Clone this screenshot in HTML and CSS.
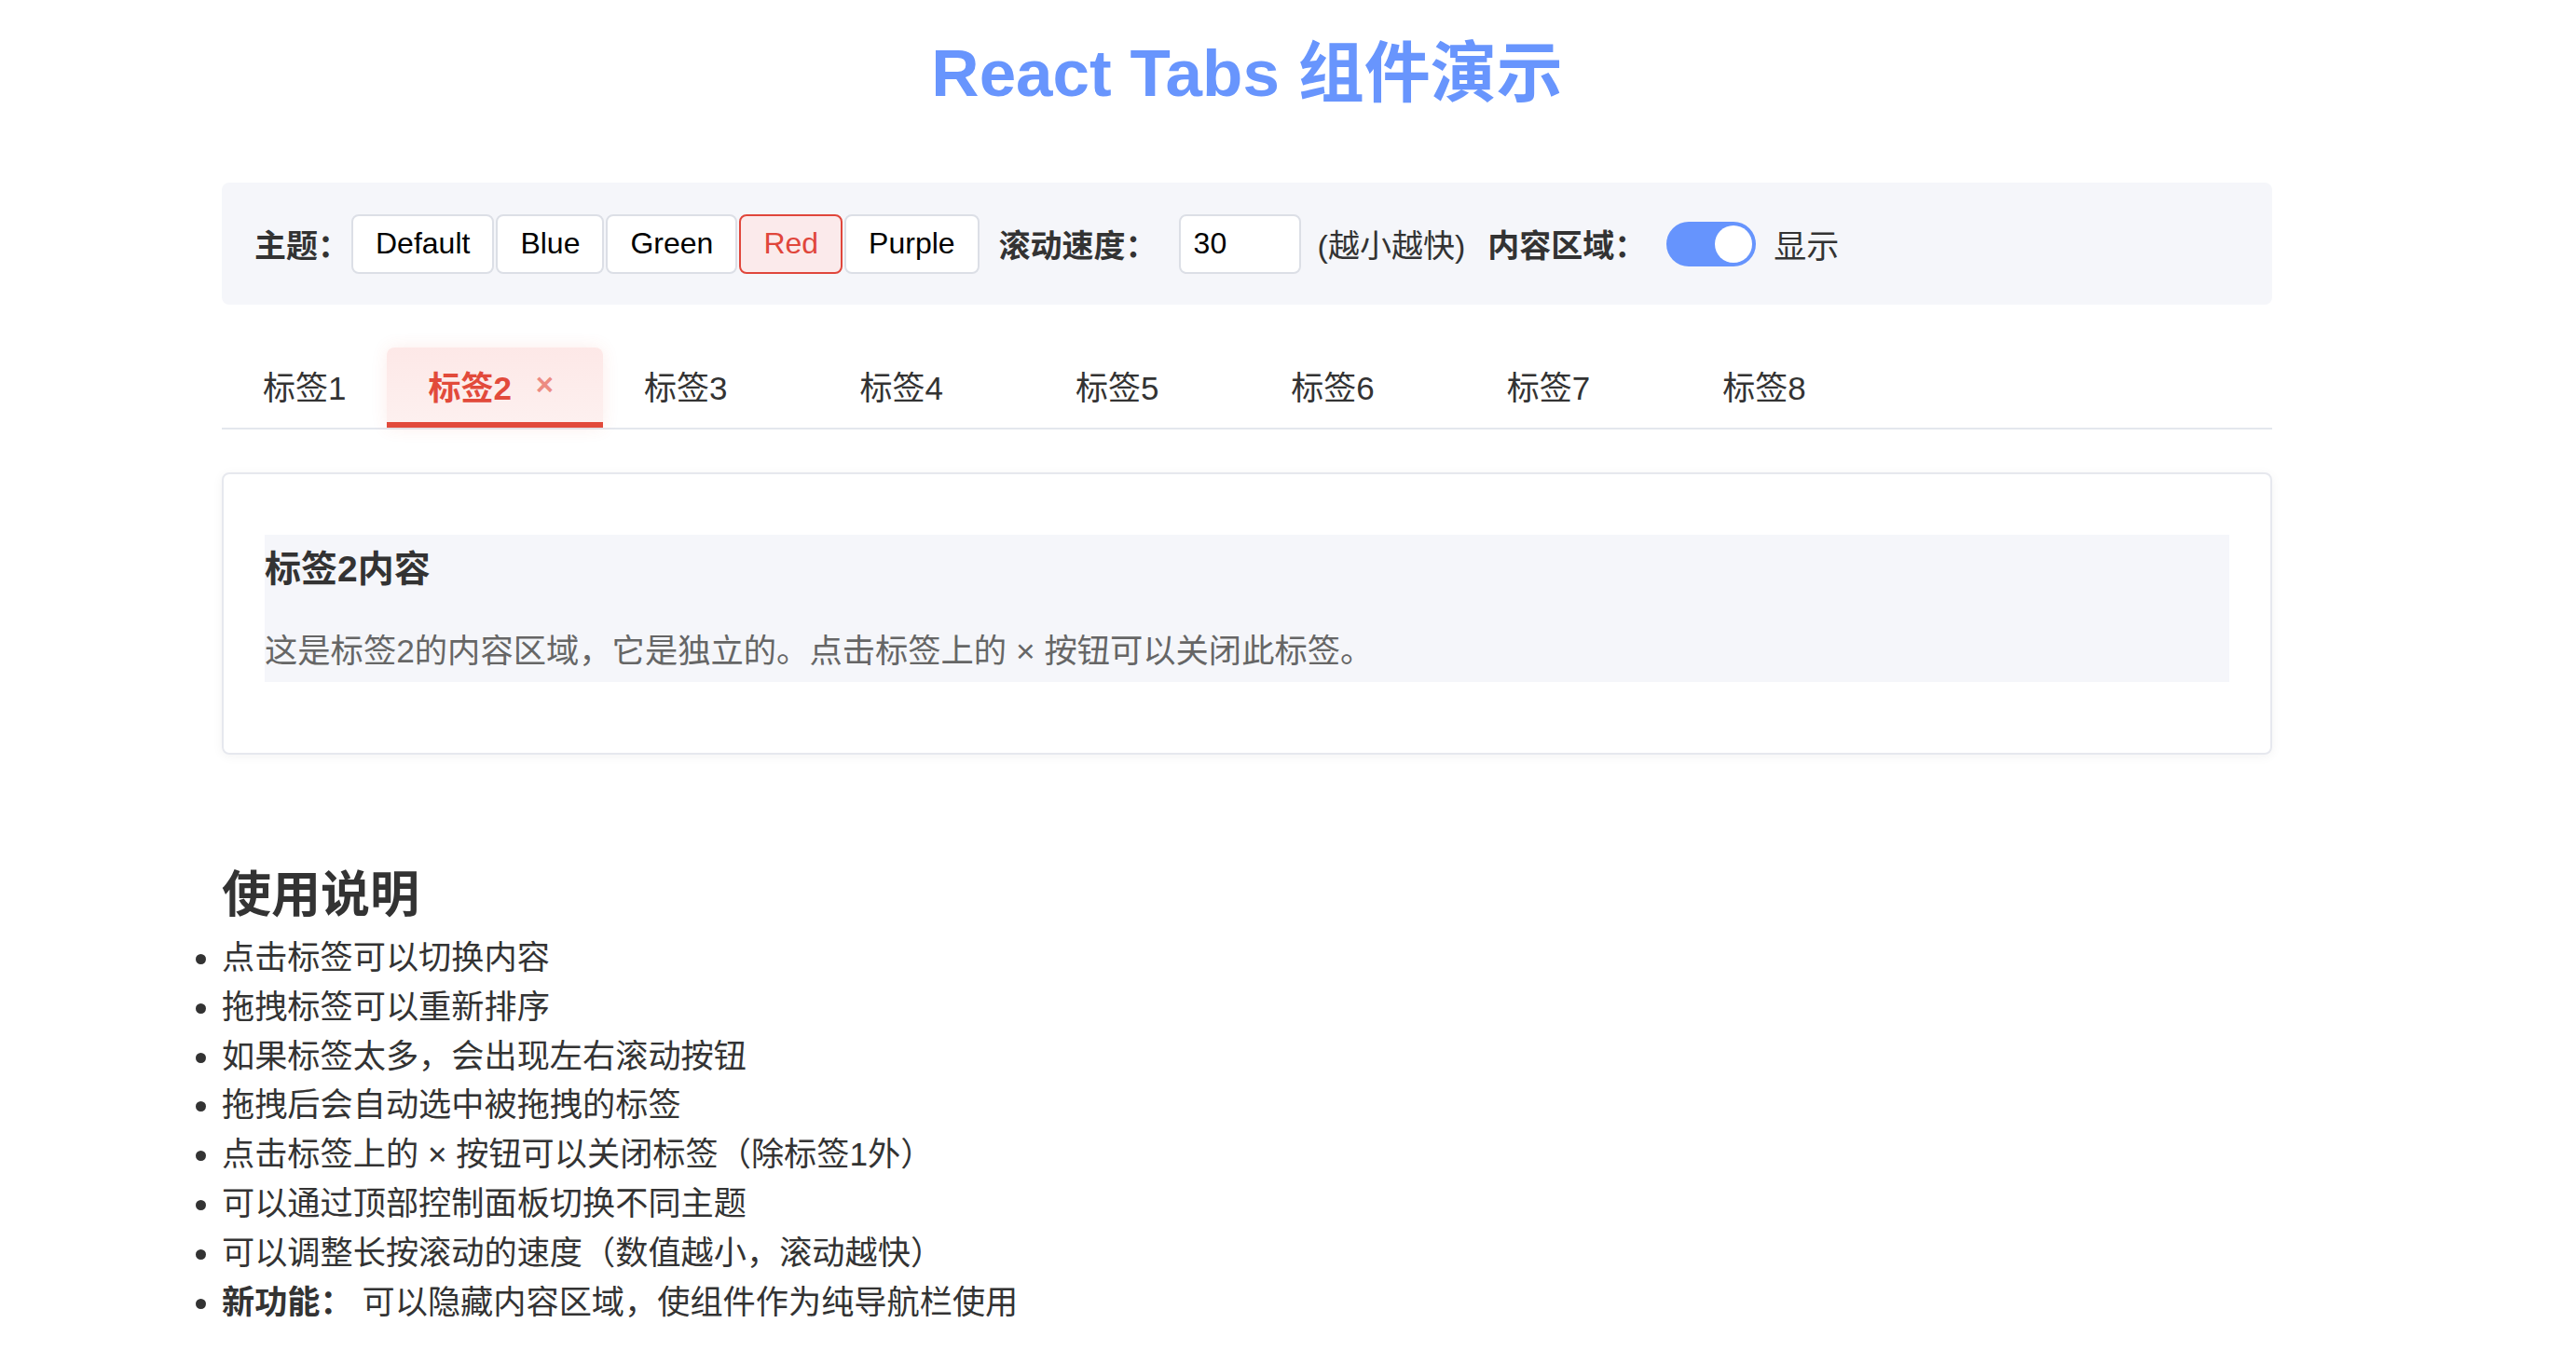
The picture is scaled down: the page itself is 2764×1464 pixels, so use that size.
FILE: index.html
```html
<!DOCTYPE html>
<html lang="zh-CN">
<head>
<meta charset="utf-8">
<title>React Tabs 组件演示</title>
<link rel="stylesheet" href="styles.css">
</head>
<body>
<div class="app">
  <h1 class="title">React Tabs 组件演示</h1>

  <div class="panel">
    <span class="label">主题：</span>
    <div class="btn-group">
      <button class="theme-btn">Default</button>
      <button class="theme-btn">Blue</button>
      <button class="theme-btn">Green</button>
      <button class="theme-btn is-active">Red</button>
      <button class="theme-btn">Purple</button>
    </div>
    <span class="label speed-label">滚动速度：</span>
    <input class="speed-input" type="text" value="30">
    <span class="hint">(越小越快)</span>
    <span class="label content-label">内容区域：</span>
    <span class="switch"><span class="knob"></span></span>
    <span class="switch-text">显示</span>
  </div>

  <div class="tabs">
    <div class="tab">标签1</div>
    <div class="tab is-active">标签2<span class="close">×</span></div>
    <div class="tab">标签3<span class="close is-hidden">×</span></div>
    <div class="tab">标签4<span class="close is-hidden">×</span></div>
    <div class="tab">标签5<span class="close is-hidden">×</span></div>
    <div class="tab">标签6<span class="close is-hidden">×</span></div>
    <div class="tab">标签7<span class="close is-hidden">×</span></div>
    <div class="tab">标签8<span class="close is-hidden">×</span></div>
  </div>

  <div class="tab-panel">
    <div class="tab-content">
      <h3 class="content-title">标签2内容</h3>
      <p class="content-text">这是标签2的内容区域，它是独立的。点击标签上的 × 按钮可以关闭此标签。</p>
    </div>
  </div>

  <div class="usage">
    <h2 class="usage-title">使用说明</h2>
    <ul class="usage-list">
      <li>点击标签可以切换内容</li>
      <li>拖拽标签可以重新排序</li>
      <li>如果标签太多，会出现左右滚动按钮</li>
      <li>拖拽后会自动选中被拖拽的标签</li>
      <li>点击标签上的 × 按钮可以关闭标签（除标签1外）</li>
      <li>可以通过顶部控制面板切换不同主题</li>
      <li>可以调整长按滚动的速度（数值越小，滚动越快）</li>
      <li><strong>新功能：</strong> 可以隐藏内容区域，使组件作为纯导航栏使用</li>
    </ul>
  </div>
</div>
</body>
</html>
```

FILE: styles.css
```css
html, body {
  margin: 0;
  padding: 0;
  background: #ffffff;
}

body {
  font-family: "Liberation Sans", "Noto Sans CJK SC", sans-serif;
  color: #333333;
}

.app {
  width: 2200px;
  margin: 0 0 0 238px;
}

.title {
  margin: 0 0 67px;
  padding-top: 29px;
  font-size: 71px;
  line-height: 100px;
  font-weight: bold;
  text-align: center;
  color: #6895fd;
}

/* control panel */
.panel {
  display: flex;
  align-items: center;
  height: 131px;
  padding: 0 35px;
  background: #f5f6fa;
  border-radius: 8px;
}

.label {
  font-size: 34px;
  font-weight: bold;
  color: #333333;
  white-space: nowrap;
}

.btn-group {
  display: flex;
  gap: 2px;
  margin-left: 2px;
}

.theme-btn {
  height: 64px;
  padding: 0 24px;
  border: 2px solid #dcdfe6;
  border-radius: 8px;
  background: #ffffff;
  font-family: "Liberation Sans", "Noto Sans CJK SC", sans-serif;
  font-size: 32px;
  color: #000000;
}

.theme-btn.is-active {
  border-color: #e0463b;
  background: #fbeaeb;
  color: #e0463b;
}

.speed-label {
  margin-left: 21px;
}

.speed-input {
  box-sizing: border-box;
  width: 131px;
  height: 64px;
  margin-left: 23px;
  padding: 0 14px;
  border: 2px solid #dcdfe6;
  border-radius: 8px;
  background: #ffffff;
  font-family: "Liberation Sans", sans-serif;
  font-size: 32px;
  color: #000000;
  outline: none;
}

.hint {
  margin-left: 18px;
  font-size: 34px;
  color: #333333;
  white-space: nowrap;
}

.content-label {
  margin-left: 24px;
}

.switch {
  box-sizing: border-box;
  width: 96px;
  height: 48px;
  margin-left: 22px;
  padding: 4px;
  display: flex;
  justify-content: flex-end;
  border-radius: 24px;
  background: #6694fd;
}

.knob {
  width: 40px;
  height: 40px;
  border-radius: 50%;
  background: #ffffff;
}

.switch-text {
  margin-left: 19px;
  font-size: 35px;
  color: #333333;
}

/* tabs */
.tabs {
  display: flex;
  margin-top: 46px;
  border-bottom: 2px solid #e4e7ed;
}

.tab {
  display: flex;
  align-items: center;
  height: 80px;
  padding: 0 44px;
  border-bottom: 6px solid transparent;
  border-radius: 8px 8px 0 0;
  font-size: 35px;
  color: #333333;
  white-space: nowrap;
}

.tab.is-active {
  border-bottom-color: #e24a3b;
  background: linear-gradient(#fde8e7, #fdf0ef);
  box-shadow: 0 0 18px rgba(226, 74, 59, 0.10);
  color: #e24a3b;
  font-weight: 600;
}

.close {
  display: flex;
  align-items: center;
  justify-content: center;
  width: 37px;
  height: 36px;
  margin-left: 17px;
  font-size: 33px;
  font-weight: bold;
  color: rgba(226, 74, 59, 0.6);
}

.close.is-hidden {
  visibility: hidden;
}

/* content */
.tab-panel {
  margin-top: 46px;
  padding: 65px 44px 76px;
  border: 2px solid #e6e8ee;
  border-radius: 8px;
  box-shadow: 0 2px 12px rgba(0, 0, 0, 0.05);
}

.tab-content {
  padding: 11px 0 8px;
  background: #f5f6fa;
}

.content-title {
  margin: 0 0 37px;
  font-size: 39px;
  line-height: 52px;
  font-weight: bold;
  color: #333333;
}

.content-text {
  margin: 0;
  font-size: 35.3px;
  line-height: 50px;
  color: #666666;
}

/* usage */
.usage {
  margin-top: 117px;
}

.usage-title {
  margin: 0;
  font-size: 53px;
  line-height: 68px;
  font-weight: bold;
  color: #333333;
}

.usage-list {
  margin: 7px 0 0;
  padding: 0;
  font-size: 35.2px;
  line-height: 52.8px;
  color: #333333;
}

.usage-list strong {
  font-weight: bold;
}
```
